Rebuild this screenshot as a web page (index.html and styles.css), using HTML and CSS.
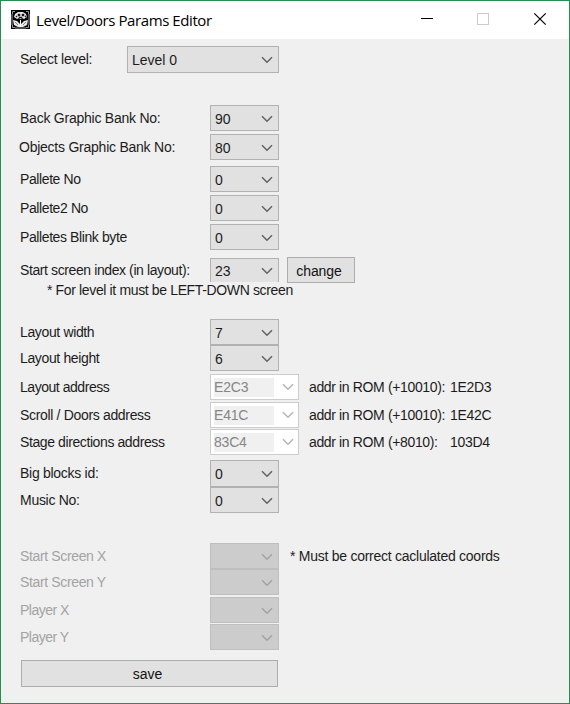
FILE: index.html
```html
<!DOCTYPE html>
<html lang="en">
<head>
<meta charset="utf-8">
<title>Level/Doors Params Editor</title>
<link rel="stylesheet" href="styles.css">
</head>
<body>
<svg class="defs" width="0" height="0"><symbol id="chev" viewBox="0 0 12 8"><path d="M1 1.3 6 6.2 11 1.3" fill="none" stroke="currentColor" stroke-width="1.5"/></symbol></svg>
<div class="window">
  <header class="titlebar">
    <svg class="app" viewBox="0 0 19 19" width="19" height="19">
      <rect width="19" height="19" fill="#000"/>
      <path d="M1.500 4V1.500H4M15 1.500h2.500V4M17.500 15v2.500H15M4 17.500H1.500V15M1 4v11M18 4v11M4 18h11" fill="none" stroke="#999"/>
      <path d="M7 2h5l3 2 1 3-3 2-2-1-1 1H9L8 8 6 9 3 7l1-3zM2 10l4 1 3 3v3H7l-4-2zM17 10l-4 1-3 3v3h2l4-2z" fill="#e8e8e8"/>
      <path d="M7 4h2v2H7zM11 4h2v2h-2zM8 7h3v1H8zM5 6h1v1H5zM14 6h1v1h-1zM4 12l3 3M15 12l-3 3" fill="#111" stroke="#222" stroke-width=".5"/>
      <path d="M9 10h1v7H9z" fill="#fff"/>
    </svg>
    <h1 class="title">Level/Doors Params Editor</h1>
    <svg class="controls" viewBox="0 0 140 38" width="140" height="38">
      <path d="M0 17.500h12" stroke="#000"/>
      <rect x="56.500" y="12.500" width="11" height="11" fill="none" stroke="#ccc"/>
      <path d="M113.300 12.300 124.700 23.700M124.700 12.300 113.300 23.700" stroke="#000" stroke-width="1.200"/>
    </svg>
  </header>
  <main class="form">
    <div class="row level"><label class="t20">Select level:</label><div class="select wide"><span>Level 0</span><svg><use href="#chev"/></svg></div></div>

    <div class="row g32"><label class="t22">Back Graphic Bank No:</label><div class="select"><span>90</span><svg><use href="#chev"/></svg></div></div>
    <div class="row g3"><label class="t22 out">Objects Graphic Bank No:</label><div class="select"><span>80</span><svg><use href="#chev"/></svg></div></div>
    <div class="row g6"><label class="t40">Pallete No</label><div class="select"><span>0</span><svg><use href="#chev"/></svg></div></div>
    <div class="row g3"><label class="t40">Pallete2 No</label><div class="select"><span>0</span><svg><use href="#chev"/></svg></div></div>
    <div class="row g3"><label class="t40">Palletes Blink byte</label><div class="select"><span>0</span><svg><use href="#chev"/></svg></div></div>
    <div class="row start"><label class="t40">Start screen index (in layout):</label><div class="select clipped"><span>23</span><svg><use href="#chev"/></svg></div><button class="change">change</button></div>
    <p class="note t36">* For level it must be LEFT-DOWN screen</p>

    <div class="row g21"><label class="t36">Layout width</label><div class="select"><span>7</span><svg><use href="#chev"/></svg></div></div>
    <div class="row"><label class="t36">Layout height</label><div class="select"><span>6</span><svg><use href="#chev"/></svg></div></div>
    <div class="row g3"><label class="t44">Layout address</label><div class="select addr"><span>E2C3</span><svg><use href="#chev"/></svg></div><span class="rom t36">addr in ROM (+10010):</span><span class="val">1E2D3</span></div>
    <div class="row g2"><label class="t33">Scroll / Doors address</label><div class="select addr"><span>E41C</span><svg><use href="#chev"/></svg></div><span class="rom t36">addr in ROM (+10010):</span><span class="val">1E42C</span></div>
    <div class="row g1"><label class="t40">Stage directions address</label><div class="select addr"><span>83C4</span><svg><use href="#chev"/></svg></div><span class="rom t36">addr in ROM (+8010):</span><span class="val">103D4</span></div>
    <div class="row g5"><label class="t26">Big blocks id:</label><div class="select tall"><span>0</span><svg><use href="#chev"/></svg></div></div>
    <div class="row"><label class="t26">Music No:</label><div class="select"><span>0</span><svg><use href="#chev"/></svg></div></div>

    <div class="row off g30"><label class="t36">Start Screen X</label><div class="select"><span></span><svg><use href="#chev"/></svg></div><span class="hint">* Must be correct caclulated coords</span></div>
    <div class="row off"><label class="t36">Start Screen Y</label><div class="select"><span></span><svg><use href="#chev"/></svg></div></div>
    <div class="row off g2"><label class="t50">Player X</label><div class="select"><span></span><svg><use href="#chev"/></svg></div></div>
    <div class="row off g1"><label class="t50">Player Y</label><div class="select"><span></span><svg><use href="#chev"/></svg></div></div>
    <button class="save">save</button>
  </main>
</div>
</body>
</html>
```
FILE: styles.css
```css
* { box-sizing: border-box; }
body { margin: 0; overflow: hidden; }
.defs { display: block; }
.window {
  width: 570px; height: 704px;
  background: #f0f0f0;
  border: 1px solid #23904f;
  font: 14px/16px "Liberation Sans", Arial, sans-serif;
  color: #1c1c1c;
}
.titlebar {
  display: flex; align-items: center;
  height: 38px; padding-left: 10px;
  background: #fff;
}
.app { flex: none; margin-top: -1px; }
.title {
  margin: 0 0 0 6px; flex: 1;
  font: 400 15px/20px "Open Sans", "Noto Sans", sans-serif;
  letter-spacing: -0.42px; color: #000; white-space: nowrap;
}
.controls { flex: none; margin-right: 8px; }
.form { padding: 7px 0 0 19px; }
.row {
  display: grid;
  grid-template-columns: 190px auto auto auto;
  justify-content: start; align-items: center;
  min-height: 26px;
}
.row.level { grid-template-columns: 107px auto; }
label { padding-bottom: 1px; white-space: nowrap; }
.level label { padding-bottom: 2px; }
label.out { margin-left: -1px; }
.select {
  display: flex; align-items: center; justify-content: space-between;
  width: 69px; height: 26px; padding: 1px 5px 0 4px;
  background: #e1e1e1; border: 1px solid #b2b2b2;
}
.select.wide { width: 152px; height: 27px; }
.select.tall { height: 27px; }
.select svg { width: 12px; height: 8px; color: #626262; }
.select.addr {
  width: 89px; padding: 0 4px 0 3px;
  background: #fff; border-color: #ccc; color: #868686;
}
.addr span { width: 60px; height: 19px; line-height: 18px; background: #f0f0f0; letter-spacing: -0.2px; }
.addr svg { color: #b4b4b4; }
.start { height: 26px; margin-top: 7px; }
.select.clipped { align-self: start; height: 24px; margin-top: 1px; border-bottom: 0; }
button {
  padding: 1px 0 0; background: #e1e1e1; border: 1px solid #adadad;
  font: inherit; color: #111; text-align: center;
}
.change { width: 68px; height: 26px; margin-left: 8px; padding-right: 4px; letter-spacing: -0.1px; }
.note { margin: -1px 0 0 27px; line-height: 16px; white-space: nowrap; }
.rom { width: 141px; margin-left: 10px; padding-bottom: 1px; white-space: nowrap; }
.val { padding-bottom: 1px; letter-spacing: -0.3px; }
.off label { color: #a3a3a3; }
.off .select { background: #ccc; border-color: #bfbfbf; }
.off .select svg { color: #a3a3a3; }
.hint { margin-left: 11px; padding-bottom: 1px; letter-spacing: -0.26px; white-space: nowrap; }
.save { display: block; width: 257px; height: 27px; margin: 10px 0 0 1px; padding-right: 4px; }
.g1 { margin-top: 1px; }
.g2 { margin-top: 2px; }
.g3 { margin-top: 3px; }
.g5 { margin-top: 5px; }
.g6 { margin-top: 6px; }
.g21 { margin-top: 21px; }
.g30 { margin-top: 30px; }
.g32 { margin-top: 32px; }
.t20 { letter-spacing: -0.25px; }
.t22 { letter-spacing: -0.24px; }
.t26 { letter-spacing: -0.28px; }
.t33 { letter-spacing: -0.33px; }
.t36 { letter-spacing: -0.36px; }
.t40 { letter-spacing: -0.4px; }
.t44 { letter-spacing: -0.46px; }
.t50 { letter-spacing: -0.5px; }
```
